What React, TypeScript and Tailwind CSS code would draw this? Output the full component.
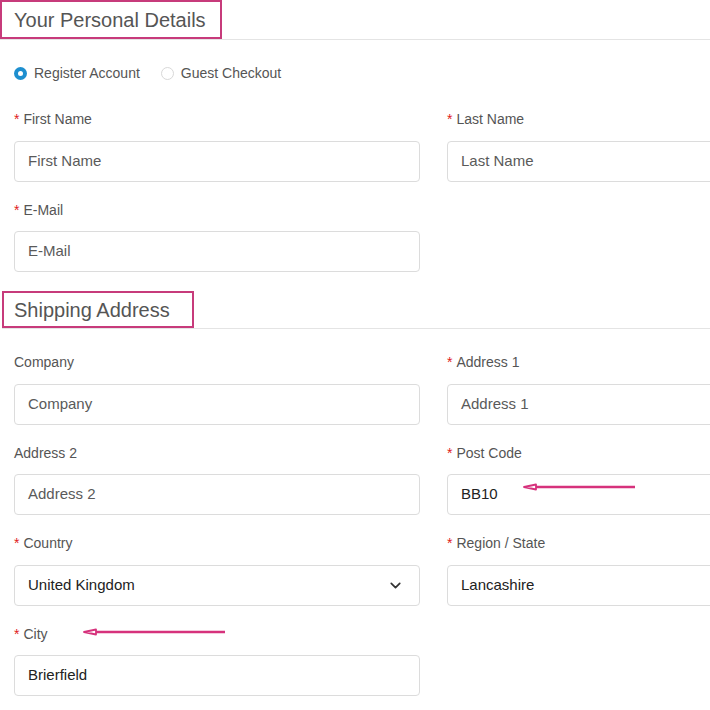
import { ChevronDown } from "lucide-react";

type FieldProps = {
  label: string;
  required?: boolean;
  value?: string;
  placeholder?: string;
  select?: boolean;
  arrow?: "post" | "city";
};

function Arrow({ width }: { width: number }) {
  return (
    <svg width={width} height="10" viewBox={`0 0 ${width} 10`} className="block">
      <line x1="10" y1="5" x2={width} y2="5" stroke="#d6327c" strokeWidth="2.5" />
      <polygon points="2,5 14,2.5 14,7.5" fill="#fff" stroke="#d6327c" strokeWidth="1.8" strokeLinejoin="round" />
    </svg>
  );
}

function Field({ label, required, value, placeholder, select, arrow }: FieldProps) {
  return (
    <div className="flex flex-col">
      <div className="relative h-[22px] leading-[22px] text-[14px] text-[#555]">
        {required && <span className="text-[#e02020] mr-[4px]">*</span>}
        {label}
        {arrow === "city" && (
          <div className="absolute left-[68px] top-[4px]">
            <Arrow width={143} />
          </div>
        )}
      </div>
      <div className="relative mt-[10.5px] h-[41px] border border-[#dcdcdc] rounded-[4px] flex items-center px-[13px] text-[15px] bg-white">
        {value ? (
          <span className="text-[#222]">{value}</span>
        ) : (
          <span className="text-[#5a5a5a]">{placeholder}</span>
        )}
        {select && (
          <ChevronDown className="absolute right-[15px] top-[11px] text-[#333]" size={17} strokeWidth={2.4} />
        )}
        {arrow === "post" && (
          <div className="absolute left-[74px] top-[7px]">
            <Arrow width={113} />
          </div>
        )}
      </div>
    </div>
  );
}

function SectionTitle({ title, className }: { title: string; className: string }) {
  return (
    <div className="border-b border-[#e4e4e4]">
      <div className={`inline-flex items-center border-2 border-[#c73b7b] text-[20px] text-[#555] ${className}`}>
        {title}
      </div>
    </div>
  );
}

export default function App() {
  return (
    <div
      className="w-[710px] h-[710px] overflow-hidden bg-white"
      style={{ fontFamily: '"Liberation Sans", Arial, sans-serif' }}
    >
      <div className="w-[900px]">
        <SectionTitle title="Your Personal Details" className="h-[39px] pl-[12px] pr-[14px]" />

        <div className="flex items-center h-[20px] mt-[23px] pl-[14px] text-[14px] text-[#555]">
          <span className="w-[13px] h-[13px] rounded-full bg-[#1e8fcf] flex items-center justify-center">
            <span className="w-[5px] h-[5px] rounded-full bg-white" />
          </span>
          <span className="ml-[7px]">Register Account</span>
          <span className="ml-[21px] w-[13px] h-[13px] rounded-full border border-[#d8d8d8]" />
          <span className="ml-[7px]">Guest Checkout</span>
        </div>

        <div className="grid grid-cols-[406px_406px] gap-x-[27px] gap-y-[17px] pl-[14px] mt-[25px]">
          <Field label="First Name" required placeholder="First Name" />
          <Field label="Last Name" required placeholder="Last Name" />
          <Field label="E-Mail" required placeholder="E-Mail" />
          <div />
        </div>

        <div className="mt-[19px] pl-[2px]">
          <SectionTitle title="Shipping Address" className="h-[37px] pl-[10px] pr-[22px]" />
        </div>

        <div className="grid grid-cols-[406px_406px] gap-x-[27px] gap-y-[17px] pl-[14px] mt-[22px]">
          <Field label="Company" placeholder="Company" />
          <Field label="Address 1" required placeholder="Address 1" />
          <Field label="Address 2" placeholder="Address 2" />
          <Field label="Post Code" required value="BB10" arrow="post" />
          <Field label="Country" required value="United Kingdom" select />
          <Field label="Region / State" required value="Lancashire" />
          <Field label="City" required value="Brierfield" arrow="city" />
          <div />
        </div>
      </div>
    </div>
  );
}
